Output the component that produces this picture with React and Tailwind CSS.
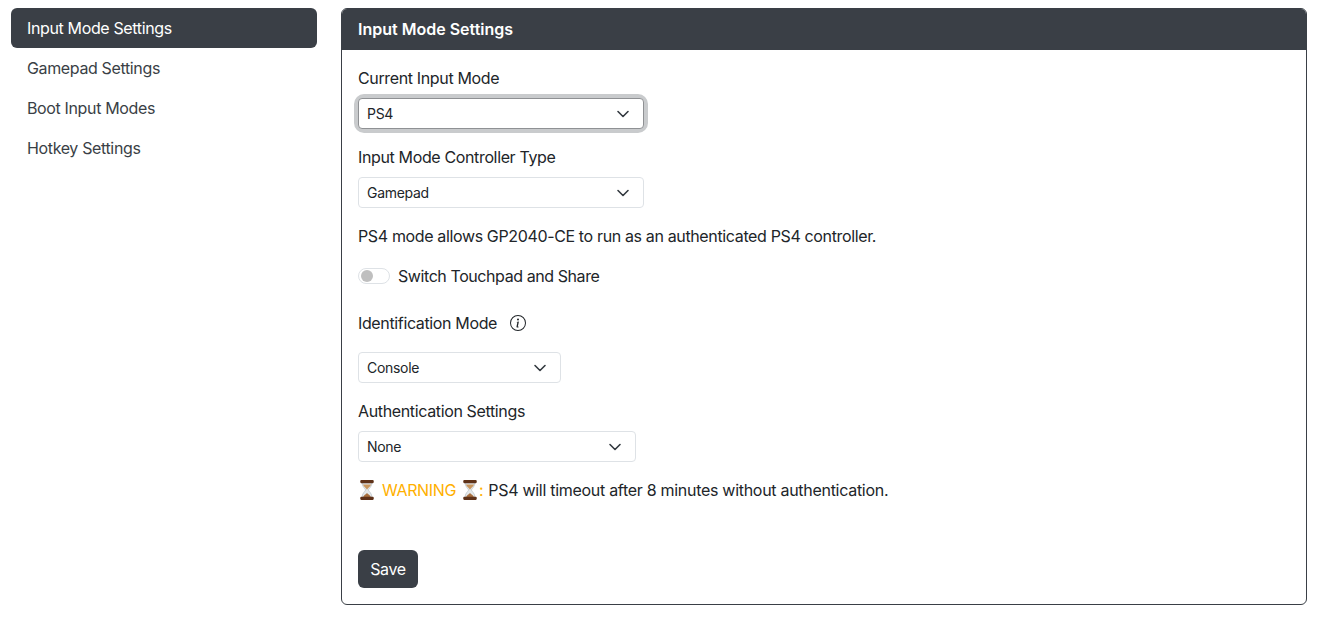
const FONT = "font-['Inter','Liberation_Sans',sans-serif]";

const navItems = ["Input Mode Settings", "Gamepad Settings", "Boot Input Modes", "Hotkey Settings"];

const Hourglass = () => (
  <svg viewBox="0 0 20 24" className="w-[18px] h-[22px] shrink-0" aria-hidden="true">
    <path d="M4.500 4h11c0 4.500-3.500 6.300-4 8 .5 1.700 4 3.500 4 8h-11c0-4.500 3.500-6.300 4-8-.5-1.700-4-3.500-4-8z" fill="#e4e9ec" stroke="#a9b2b8" strokeWidth=".6" />
    <path d="M5.500 6h9c-.6 2.500-3.700 3.900-4.500 5.800-.8-1.900-3.900-3.300-4.500-5.800z" fill="#c9975f" />
    <path d="M5.800 19.700c.6-2.300 3-2.700 4.200-4.400 1.200 1.700 3.600 2.100 4.200 4.400z" fill="#a86f3e" />
    <rect x="2.500" y="1" width="15" height="3.400" rx="1.200" fill="#5f3219" />
    <rect x="2.500" y="19.600" width="15" height="3.400" rx="1.200" fill="#5f3219" />
  </svg>
);

const Select = ({ value, width, focused }) => (
  <div className={`relative ${width}`}>
    <select
      defaultValue={value}
      className={`block w-full h-[31px] appearance-none bg-white border rounded-[4px] pl-2 pr-9 text-[14px] tracking-[-0.3px] text-[#212529] outline-none ${focused ? "border-[#8f9194]" : "border-[#dee2e6]"}`}
    >
      <option>{value}</option>
    </select>
    <svg viewBox="0 0 16 16" className="absolute right-[13px] top-[8px] w-4 h-4 pointer-events-none" fill="none" stroke="#343a40" strokeWidth="1.600" strokeLinecap="round" strokeLinejoin="round">
      <path d="m3 5.500 5 5 5-5" />
    </svg>
  </div>
);

export default function App() {
  return (
    <div className={`${FONT} bg-white text-[#212529] text-[16px] leading-6 tracking-[-0.36px] h-[619px] overflow-hidden flex items-start pt-2 pl-[11px] pr-3 gap-6`}>
      {/* Sidebar */}
      <nav className="w-[306px] shrink-0 flex flex-col">
        {navItems.map((item, i) => (
          <a
            key={item}
            href="#"
            className={`h-10 px-4 flex items-center rounded-md ${i === 0 ? "bg-[#3a3f46] text-white" : "text-[#3a3f46]"}`}
          >
            {item}
          </a>
        ))}
      </nav>

      {/* Card */}
      <div className="flex-1 h-[597px] border border-[#3a3f46] rounded-md overflow-hidden flex flex-col">
        <div className="h-[41px] shrink-0 bg-[#3a3f46] text-white font-semibold tracking-normal px-4 pb-[2px] flex items-center">
          Input Mode Settings
        </div>
        <div className="px-4 flex flex-col items-start">
          <label className="mt-4 mb-2">Current Input Mode</label>
          <div className="rounded-[6px] ring-4 ring-[#c9cbcd]">
            <Select value="PS4" width="w-[286px]" focused />
          </div>

          <label className="mt-4 mb-2">Input Mode Controller Type</label>
          <Select value="Gamepad" width="w-[286px]" />

          <p className="mt-4">PS4 mode allows GP2040-CE to run as an authenticated PS4 controller.</p>

          <div className="mt-4 flex items-center gap-2">
            <span className="w-8 h-4 rounded-full border border-[#dee2e6] bg-white flex items-center pl-[2px]">
              <span className="w-3 h-3 rounded-full bg-[#bfbfbf]" />
            </span>
            <span className="tracking-[-0.42px]">Switch Touchpad and Share</span>
          </div>

          <div className="mt-[23px] flex items-center gap-[13px]">
            <span>Identification Mode</span>
            <svg viewBox="0 0 16 16" className="w-4 h-4" fill="#212529">
              <path d="M8 15A7 7 0 1 1 8 1a7 7 0 0 1 0 14zm0 1A8 8 0 1 0 8 0a8 8 0 0 0 0 16z" />
              <path d="m8.930 6.588-2.290.287-.082.380.450.083c.294.070.352.176.288.469l-.738 3.468c-.194.897.105 1.319.808 1.319.545 0 1.178-.252 1.465-.598l.088-.416c-.200.176-.492.246-.686.246-.275 0-.375-.193-.304-.533L8.930 6.588zM9 4.500a1 1 0 1 1-2 0 1 1 0 0 1 2 0z" />
            </svg>
          </div>

          <div className="mt-[17px]">
            <Select value="Console" width="w-[203px]" />
          </div>

          <label className="mt-4 mb-2">Authentication Settings</label>
          <Select value="None" width="w-[278px]" />

          <p className="mt-4 flex items-center">
            <Hourglass />
            <span className="ml-[6px] text-[#ffb000]">WARNING</span>
            <span className="ml-[5px]"><Hourglass /></span>
            <span className="text-[#ffb000]">:</span>
            <span className="ml-[5px] tracking-[-0.29px]">PS4 will timeout after 8 minutes without authentication.</span>
          </p>

          <button className="mt-[48px] h-[38px] w-[60px] rounded-md bg-[#3a3f46] text-white">Save</button>
        </div>
      </div>
    </div>
  );
}
